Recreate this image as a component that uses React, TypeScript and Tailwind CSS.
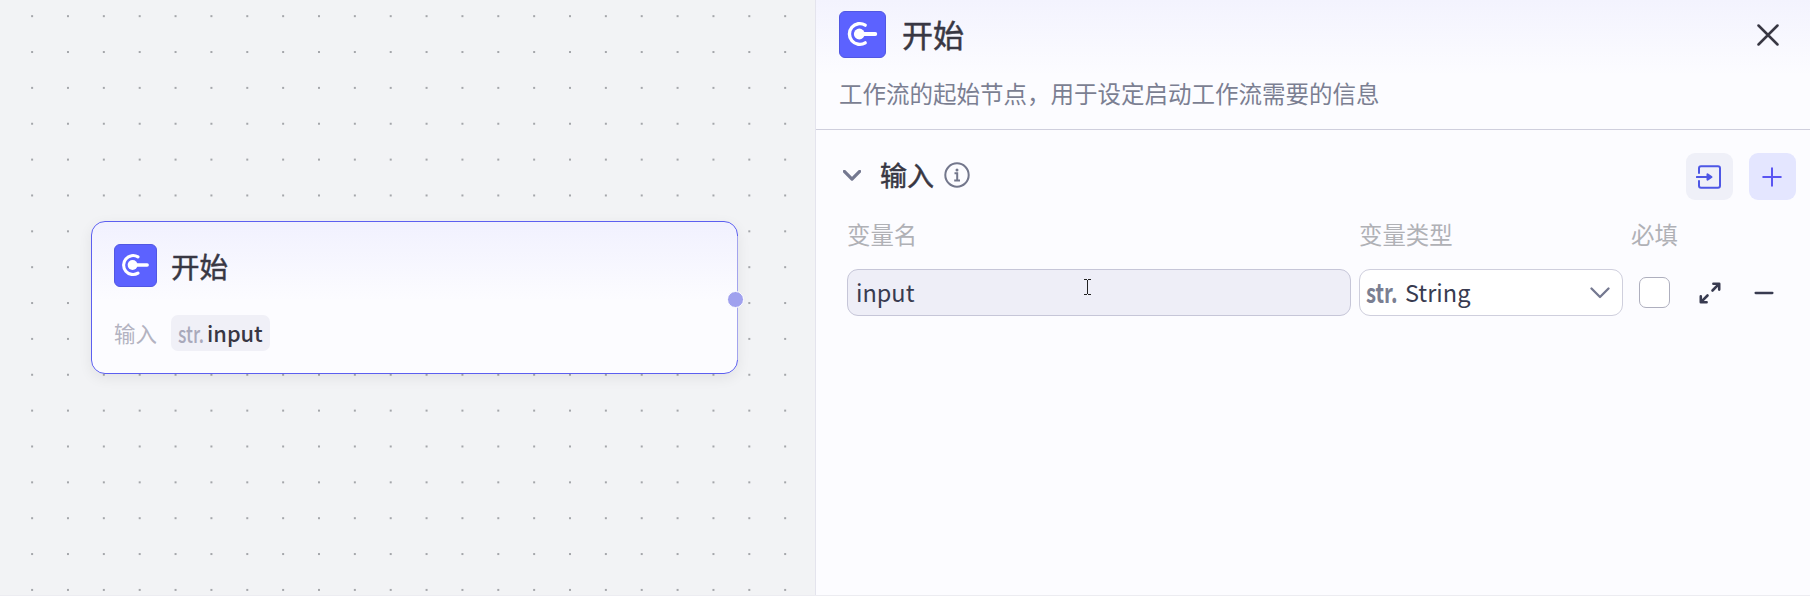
import clsx from "clsx";

function StartIcon({ className }: { className?: string }) {
  return (
    <div className={clsx("shrink-0 rounded-md border border-[#5157e2] bg-[#5c62ff]", className)}>
      <svg viewBox="1 1 45 45" className="h-full w-full" fill="none" stroke="#fff" strokeLinecap="round">
        <path d="M26.2 14.1A10.4 10.4 0 1 0 26.2 31.9" strokeWidth="3.4" />
        <circle cx="20.3" cy="23" r="5.4" fill="#fff" stroke="none" />
        <path d="M20.3 23H36.3" strokeWidth="3.8" />
      </svg>
    </div>
  );
}

function ChevronDown({ className, width }: { className?: string; width: number }) {
  return (
    <svg viewBox="0 0 20 12" className={className} fill="none" stroke="currentColor" strokeWidth={width} strokeLinecap="round" strokeLinejoin="round">
      <path d="M1.5 1.5 10 10l8.5-8.5" />
    </svg>
  );
}

function StartNode() {
  return (
    <div className="relative ml-[91px] mt-[221px] h-[153px] w-[647px] rounded-[14px] border border-[#5c5ff0] bg-[linear-gradient(180deg,#f1f1fe_0%,#fcfcff_52%,#fcfcff_100%)] pl-[22px] pt-[22px] shadow-[0_4px_14px_rgba(0,0,0,0.07)]">
      <div className="flex items-center">
        <StartIcon className="size-[43px]" />
        <span className="ml-[14px] text-[28.5px] leading-[43px] text-[#383743] [-webkit-text-stroke:0.5px]">开始</span>
      </div>
      <div className="mt-[28px] flex h-[36px] items-center">
        <span className="w-[57px] text-[21.5px] leading-[36px] text-[#b3b3c1]">输入</span>
        <div className="flex h-[36px] w-[99px] items-center rounded-[7px] bg-[#f0f0f7] pl-[7px]">
          <span className="w-[29px] origin-left scale-x-[0.76] text-[23px] leading-[36px] font-medium text-[#a9a9bb]">str.</span>
          <span className="text-[21.8px] leading-[36px] font-medium text-[#383743]">input</span>
        </div>
      </div>
      <div className="absolute -right-px top-[14px] h-[124px] w-px bg-[#a3a4ee]" />
      <div className="absolute -right-[7px] top-[69px] size-[17px] rounded-full border border-white bg-[#a0a1ee]" />
    </div>
  );
}

function PanelHeader() {
  return (
    <header className="h-[130px] border-b border-[#cfcfdd] bg-[linear-gradient(180deg,#f3f3fe_0px,#fcfcff_75px)] pl-[23px] pr-[31px] pt-[11px]">
      <div className="flex h-[47px] items-center">
        <StartIcon className="size-[47px]" />
        <h1 className="ml-[16px] pb-[2px] text-[31px] leading-[45px] text-[#383743] [-webkit-text-stroke:0.5px]">开始</h1>
        <svg viewBox="0 0 22 22" className="ml-auto size-[22px]" fill="none" stroke="#383743" strokeWidth="2.5" strokeLinecap="round">
          <path d="M1.5 1.5 20.5 20.5M20.5 1.5 1.5 20.5" />
        </svg>
      </div>
      <p className="mt-[17px] text-[23.5px] leading-[36px] text-[#7b7f92]">工作流的起始节点，用于设定启动工作流需要的信息</p>
    </header>
  );
}

function InputSection() {
  return (
    <section className="pl-[27px] pr-[14px] pt-[23px]">
      <div className="flex h-[47px] items-center">
        <ChevronDown className="mb-[2px] h-[11px] w-[18px] text-[#747890]" width={3.6} />
        <h2 className="ml-[19px] pb-[3px] text-[27px] leading-[44px] text-[#383743] [-webkit-text-stroke:0.5px]">输入</h2>
        <svg viewBox="0 0 26 26" className="mb-[3px] ml-[10px] size-[26px]" fill="none" stroke="#73778c" strokeWidth="2">
          <circle cx="13" cy="13" r="11.7" />
          <path d="M10.5 11.2H13.2V18.4M10.2 18.4H16" />
          <circle cx="13" cy="7.9" r="1.5" fill="#73778c" stroke="none" />
        </svg>
        <button className="ml-auto flex size-[47px] items-center justify-center rounded-[9px] bg-[#eff0f8] pr-[2px]">
          <svg viewBox="0 0 26 24" className="h-[24px] w-[26px]" fill="none" stroke="#4e57e5" strokeWidth="2" strokeLinejoin="round">
            <path d="M3 8.8V3.2Q3 1.2 5 1.2H22Q24 1.2 24 3.2V20.8Q24 22.8 22 22.8H5Q3 22.8 3 20.8V15.2" />
            <path d="M.8 12H14" strokeLinecap="round" />
            <path d="M11.5 9.2 15.5 12l-4 2.8Z" fill="#4e57e5" />
          </svg>
        </button>
        <button className="ml-[16px] flex size-[47px] items-center justify-center rounded-[9px] bg-[#e4e6ff] pr-[1px]">
          <svg viewBox="0 0 20 20" className="size-[20px]" fill="none" stroke="#5a55f2" strokeWidth="2" strokeLinecap="round">
            <path d="M10 1.2V18.8M1.2 10H18.8" />
          </svg>
        </button>
      </div>

      <div className="mt-[17px] flex h-[34px] items-center pl-[4px] text-[23.4px] leading-[34px] text-[#b0b1b6]">
        <span className="w-[512px]">变量名</span>
        <span className="w-[272px]">变量类型</span>
        <span>必填</span>
      </div>

      <div className="mt-[18px] flex h-[47px] items-center pl-[4px] text-[23.5px] text-[#383b50]">
        <div className="relative flex h-[47px] w-[504px] items-center rounded-[11px] border border-[#c6c6d8] bg-[#eeeef7] pl-[8px]">
          <span className="leading-[47px]">input</span>
          <svg viewBox="0 0 7 16" className="absolute left-[236px] top-[9px] h-[16px] w-[7px]" fill="none" stroke="#222" shapeRendering="crispEdges">
            <path d="M0 .5H3M4 .5H7M3.5 1V15M0 15.5H3M4 15.5H7" />
          </svg>
        </div>
        <div className="ml-[8px] flex h-[47px] w-[264px] items-center rounded-[11px] border border-[#cfcfdd] bg-white pl-[6px] pr-[12px]">
          <span className="w-[39px] origin-left scale-x-[0.75] pb-[2px] text-[27px] font-bold leading-[45px] text-[#7b7f92]">str.</span>
          <span className="leading-[47px]">String</span>
          <ChevronDown className="ml-auto h-[12px] w-[20px] text-[#747890]" width={2.3} />
        </div>
        <div className="ml-[16px] size-[31px] rounded-[7px] border border-[#aeafbe] bg-white" />
        <svg viewBox="0 0 22 22" className="ml-[29px] size-[22px]" fill="none" stroke="#383b50" strokeWidth="2.6" strokeLinecap="round" strokeLinejoin="round">
          <path d="M13.5 8.5 19.8 2.2M14.4 1.8H20.2V7.6M8.5 13.5 2.2 19.8M1.8 14.4V20.2H7.6" />
        </svg>
        <svg viewBox="0 0 20 4" className="ml-[33px] h-[4px] w-[20px]" fill="none" stroke="#383b50" strokeWidth="2.3" strokeLinecap="round">
          <path d="M1.6 2H18.4" />
        </svg>
      </div>
    </section>
  );
}

export default function App() {
  return (
    <div className="flex h-[596px] w-[1810px] overflow-hidden border-b border-[#ececf1] bg-[#f2f3f5] font-['Noto_Sans_CJK_SC',sans-serif]">
      <main className="w-[815px] shrink-0 bg-[radial-gradient(circle_at_center,#a4a6aa_0px,#a4a6aa_0.7px,transparent_1.5px)] bg-[length:35.87px_35.87px] bg-[position:14.2px_34.1px]">
        <StartNode />
      </main>
      <aside className="w-[995px] shrink-0 border-l border-[#e4e4ed] bg-[#fcfcff]">
        <PanelHeader />
        <InputSection />
      </aside>
    </div>
  );
}
